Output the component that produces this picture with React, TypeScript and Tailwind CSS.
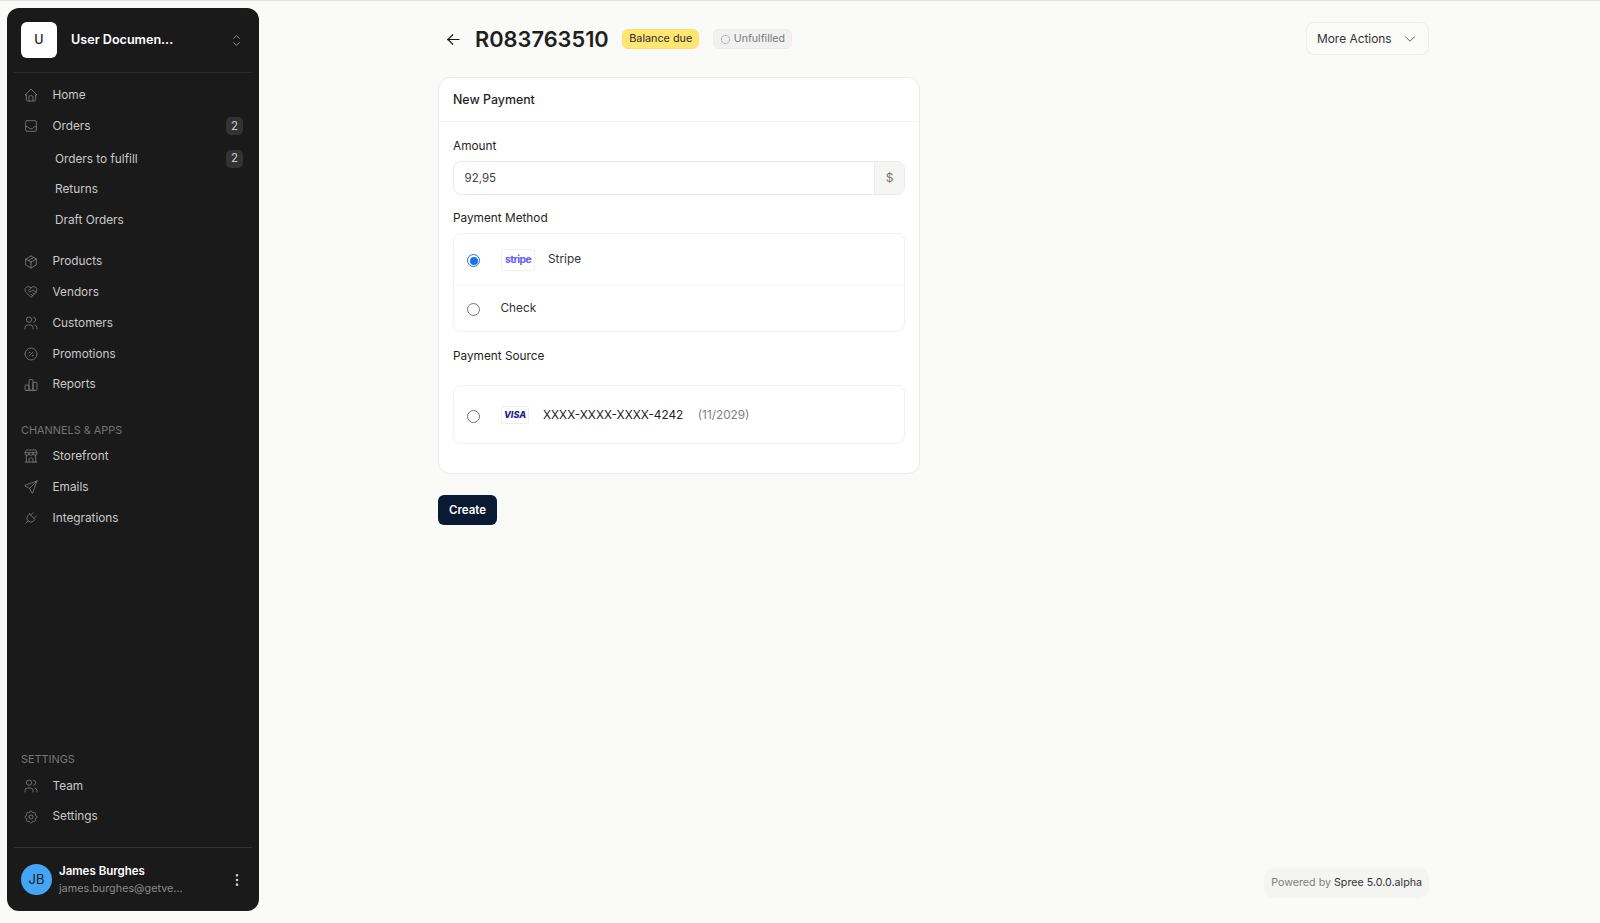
import { TbArrowLeft, TbPackage, TbChartBar, TbChevronDown, TbSelector, TbDotsVertical, TbHeartHandshake, TbHome, TbInbox, TbPlug, TbSend, TbSettings, TbBuildingStore, TbUsers, TbCircleDashed, TbDiscount } from "react-icons/tb";
import type { ReactNode } from "react";

function NavRow({ icon, label, badge }: { icon: ReactNode; label: string; badge?: string }) {
  return (
    <div className="h-[30.75px] flex items-center pl-[7px] pr-[9px] text-[11.8px] text-[#c9c9c9]">
      <span className="w-[20px] flex justify-center text-[#7d7d7d]">{icon}</span>
      <span className="ml-[11.5px] flex-1 pt-[1px]">{label}</span>
      {badge && <span className="w-[17px] h-[18px] rounded-[5px] bg-[#333333] text-[11.5px] flex items-center justify-center text-[#c9c9c9]">{badge}</span>}
    </div>
  );
}

function SubRow({ label, badge }: { label: string; badge?: string }) {
  return (
    <div className="h-[30.75px] flex items-center pl-[41px] pr-[9px] text-[11.8px] text-[#c9c9c9]">
      <span className="flex-1 pt-[1px]">{label}</span>
      {badge && <span className="w-[17px] h-[18px] rounded-[5px] bg-[#333333] text-[11.5px] flex items-center justify-center">{badge}</span>}
    </div>
  );
}

function Heading({ children }: { children: ReactNode }) {
  return <div className="pl-[7px] text-[10.9px] leading-[16px] text-[#757575]">{children}</div>;
}

function Sidebar() {
  const s = 16;
  const w = 1.25;
  return (
    <aside className="w-[252px] shrink-0 rounded-[12px] bg-[#1a1a1a] flex flex-col px-[7px] text-white">
      <div className="h-[65px] shrink-0 border-b border-[#2c2c2c] flex items-center pl-[7px] pr-[7px]">
        <div className="w-[36px] h-[36px] rounded-[6px] bg-white text-[#1a1a1a] text-[12.5px] font-medium flex items-center justify-center">U</div>
        <span className="ml-[14px] flex-1 text-[12.6px] font-semibold pt-[1px]">User Documen...</span>
        <TbSelector size={17} strokeWidth={1.25} className="text-[#a0a0a0]" />
      </div>
      <nav className="pt-[6.5px]">
        <NavRow icon={<TbHome size={s} strokeWidth={w} />} label="Home" />
        <div className="pt-[0.5px]">
          <NavRow icon={<TbInbox size={s} strokeWidth={w} />} label="Orders" badge="2" />
        </div>
        <div className="pt-[2px] pb-[10.5px]">
          <SubRow label="Orders to fulfill" badge="2" />
          <SubRow label="Returns" />
          <SubRow label="Draft Orders" />
        </div>
        <NavRow icon={<TbPackage size={s} strokeWidth={w} />} label="Products" />
        <NavRow icon={<TbHeartHandshake size={s} strokeWidth={w} />} label="Vendors" />
        <NavRow icon={<TbUsers size={s} strokeWidth={w} />} label="Customers" />
        <NavRow icon={<TbDiscount size={s} strokeWidth={w} />} label="Promotions" />
        <NavRow icon={<TbChartBar size={s} strokeWidth={w} />} label="Reports" />
      </nav>
      <div className="pt-[21.5px]">
        <Heading>CHANNELS &amp; APPS</Heading>
        <div className="pt-[3.5px]">
          <NavRow icon={<TbBuildingStore size={s} strokeWidth={w} />} label="Storefront" />
          <NavRow icon={<TbSend size={s} strokeWidth={w} />} label="Emails" />
          <NavRow icon={<TbPlug size={s} strokeWidth={w} />} label="Integrations" />
        </div>
      </div>
      <div className="mt-auto pb-[15px]">
        <Heading>SETTINGS</Heading>
        <div className="pt-[3.5px]">
          <NavRow icon={<TbUsers size={s} strokeWidth={w} />} label="Team" />
          <NavRow icon={<TbSettings size={s} strokeWidth={w} />} label="Settings" />
        </div>
      </div>
      <div className="h-[64px] shrink-0 border-t border-[#333333] flex items-center pl-[7px] pr-[7px]">
        <div className="w-[31px] h-[31px] rounded-full bg-[#42a5f5] text-[#1a1a1a] text-[13px] flex items-center justify-center">JB</div>
        <div className="ml-[7px] flex-1 flex flex-col pt-[1px]">
          <span className="text-[11.5px] leading-[17px] font-semibold">James Burghes</span>
          <span className="text-[10.8px] leading-[17px] text-[#8a8a8a]">james.burghes@getve...</span>
        </div>
        <TbDotsVertical size={16} className="text-[#c9c9c9]" />
      </div>
    </aside>
  );
}

function Radio({ checked }: { checked?: boolean }) {
  return (
    <span className={`w-[13px] h-[13px] mt-[2px] rounded-full shrink-0 flex items-center justify-center border ${checked ? "border-[#1a73e8]" : "border-[#767676]"} bg-white`}>
      {checked && <span className="w-[8px] h-[8px] rounded-full bg-[#1a73e8]" />}
    </span>
  );
}

function Main() {
  return (
    <main className="flex-1 min-w-0 flex flex-col pl-[179px] pr-[171px]">
      <header className="h-[47px] pt-[14px] flex items-center shrink-0">
        <TbArrowLeft size={19} strokeWidth={1.5} className="ml-[6px] mt-[1px] text-[#1a1a1a]" />
        <h1 className="ml-[12px] text-[21.8px] font-semibold text-[#1f1f1f] leading-none pt-[2px]">R083763510</h1>
        <span className="ml-[13.5px] mt-[1px] h-[20px] px-[6px] rounded-[6px] bg-[#fde772] border border-[#fce26a] text-[10.8px] text-[#2b2b2b] flex items-center">Balance due</span>
        <span className="ml-[13.5px] mt-[1px] h-[20px] px-[6px] rounded-[6px] bg-[#f1f1f1] border border-[#ececec] text-[10.6px] text-[#7a7a7a] flex items-center gap-[3px]">
          <TbCircleDashed size={11} strokeWidth={1.5} />
          Unfulfilled
        </span>
        <button className="ml-auto h-[33px] w-[123px] pt-[1px] rounded-[8px] border border-[#efefef] bg-[#fbfbf9] text-[11.9px] text-[#333333] flex items-center pl-[10px]">
          More Actions
          <TbChevronDown size={18} strokeWidth={1.25} className="ml-[9px] text-[#555555]" />
        </button>
      </header>
      <section className="mt-[22px] w-[482px] h-[397px] rounded-[12px] border border-[#ececec] bg-white shrink-0 flex flex-col">
        <div className="h-[44px] shrink-0 border-b border-[#f3f3f3] flex items-center px-[14px] pt-[1px] text-[12.4px] font-medium text-[#1f1f1f]">New Payment</div>
        <div className="px-[14px] flex flex-col">
          <label className="pt-[16px] text-[11.8px] leading-[16px] text-[#242424]">Amount</label>
          <div className="mt-[7px] h-[34px] flex rounded-[8px] border border-[#ebebeb] overflow-hidden">
            <div className="flex-1 flex items-center px-[10.5px] pt-[1px] text-[11.5px] text-[#444444]">92,95</div>
            <div className="w-[30px] bg-[#f5f5f3] border-l border-[#ebebeb] flex items-center justify-center text-[12px] text-[#777777]">$</div>
          </div>
          <label className="mt-[15px] text-[11.8px] leading-[16px] text-[#242424]">Payment Method</label>
          <div className="mt-[7px] rounded-[8px] border border-[#f1f1f1]">
            <div className="h-[51px] border-b border-[#f4f4f4] flex items-center pl-[13px] pt-[1px] text-[11.8px] text-[#333333]">
              <Radio checked />
              <span className="ml-[21px] w-[34px] h-[22px] rounded-[3px] border border-[#eeeeee] flex items-center justify-center text-[10.5px] font-bold tracking-[-0.6px] text-[#635bff]">stripe</span>
              <span className="ml-[13px] pt-[1px]">Stripe</span>
            </div>
            <div className="h-[46px] flex items-center pl-[13px] pt-[1px] text-[11.8px] text-[#333333]">
              <Radio />
              <span className="ml-[20.5px] pt-[1px]">Check</span>
            </div>
          </div>
          <label className="mt-[16px] text-[11.8px] leading-[16px] text-[#242424]">Payment Source</label>
          <div className="mt-[21px] h-[59px] rounded-[8px] border border-[#f1f1f1] flex items-center pl-[13px] pt-[1px] text-[11.8px]">
            <Radio />
            <span className="ml-[21px] w-[28px] h-[18px] rounded-[2px] border border-[#eeeeee] flex items-center justify-center text-[9px] font-extrabold italic text-[#1a1f8f]">VISA</span>
            <span className="ml-[14px] pt-[2px] text-[#242424]">XXXX-XXXX-XXXX-4242</span>
            <span className="ml-[14.5px] pt-[2px] text-[#808080]">(11/2029)</span>
          </div>
        </div>
      </section>
      <button className="mt-[21px] w-[59px] h-[30px] pt-[1px] rounded-[6px] bg-[#0a1a33] text-white text-[11.5px] font-semibold shrink-0">Create</button>
      <footer className="mt-auto mb-[13px] self-end h-[30px] px-[7px] rounded-[10px] bg-[#f4f4f3] flex items-center text-[10.7px] text-[#808080] whitespace-pre">
        Powered by <span className="text-[#333333]">Spree 5.0.0.alpha</span>
      </footer>
    </main>
  );
}

export default function App() {
  return (
    <div className="h-[923px] w-[1600px] overflow-hidden bg-[#fafaf8] border-t border-[#e5e5e5] flex pl-[7px] pt-[7px] pb-[12px] font-['Inter',sans-serif]">
      <Sidebar />
      <Main />
    </div>
  );
}
